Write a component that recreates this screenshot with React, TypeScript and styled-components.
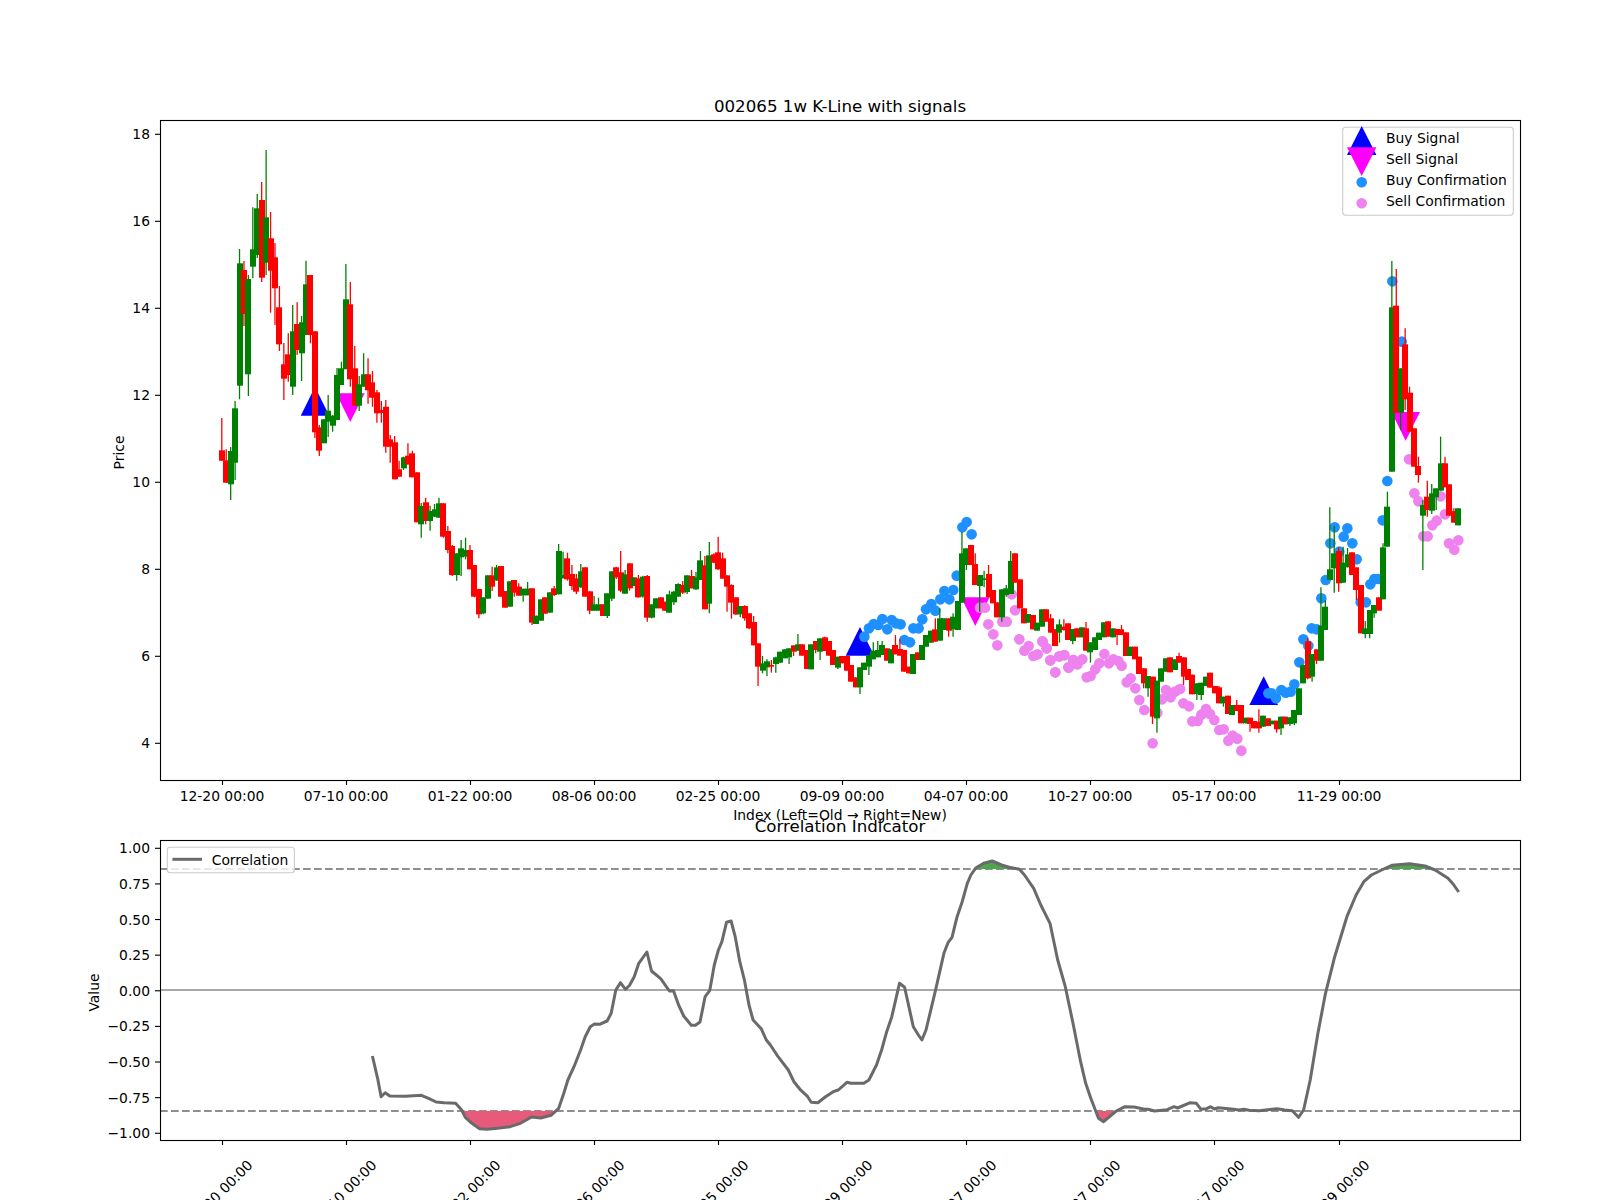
import React from "react";
import styled, { createGlobalStyle } from "styled-components";

type Row = [string, number, number, number?, number?];

const CANDLE_STEP = 4.432;
const CANDLE_START = 221.8;

// rows are [colour, bodyTop, bodyBottom, wickTop, wickBottom], read off the plot in thirds of a pixel
const section = (start: number, base: number, scale: number, rows: Row[]) =>
  rows.map(([c, top, bottom, wickTop, wickBottom], n) => ({
    x: CANDLE_START + CANDLE_STEP * (start + n),
    color: c === "r" ? "#ff0000" : "#008000",
    top: base + top / scale,
    bottom: base + bottom / scale,
    wickTop: base + (wickTop ?? top) / scale,
    wickBottom: base + (wickBottom ?? bottom) / scale,
  }));

const candles = [
  ...section(0, 0, 1, [
    ["r", 450.3, 460.7, 418, 460.7], ["r", 460.3, 482.7, 449.3, 483], ["g", 451, 484.3, 447, 500], ["g", 408.3, 462.7, 401, 480],
    ["g", 263.3, 385.7, 249, 399.3], ["r", 270, 314, 261, 326], ["g", 279, 374.3, 275, 396], ["g", 249.3, 266.7, 207.3, 278],
    ["g", 208.3, 255, 194, 258], ["r", 200, 277.7, 182, 282], ["g", 217.3, 262.7, 150, 275], ["r", 238.3, 270.7, 212, 312.7],
    ["r", 257.3, 288.3, 243, 325], ["r", 307.3, 344.3, 286, 351], ["r", 364.3, 378.7, 343, 400], ["r", 354.3, 375, 333.3, 381.7],
    ["g", 331.3, 386.7, 305, 395], ["r", 324, 350, 302.3, 355], ["g", 322.3, 353.3, 316, 381], ["g", 284.3, 335, 260.7, 335],
    ["r", 275, 335, 275, 343.3], ["r", 331.3, 432.3, 331, 438], ["r", 427.3, 450.7, 425, 456], ["g", 419.3, 443.3],
    ["g", 410.7, 421.7, 395, 437], ["g", 415.7, 425.7, 415, 431.7], ["g", 375, 420, 368, 420], ["g", 368.3, 385, 361.7, 385],
    ["g", 299.3, 369.3, 264, 369], ["r", 304.3, 379.3, 282, 386.7], ["r", 368.3, 405.7, 346, 405.7], ["g", 384.3, 405.7, 376, 411],
    ["g", 374.3, 386.7, 353.3, 386.7], ["r", 374.3, 390.3, 358.3, 403.7], ["r", 382.3, 397.7, 371, 406.7], ["r", 392.3, 413.3, 390, 422.7],
    ["r", 410, 413, 401, 422.7], ["r", 406.7, 446.7, 400, 452.7], ["r", 439.3, 446.7, 435, 462.7], ["r", 442.3, 479.3, 436, 479.3],
    ["r", 469.3, 476.7, 460.7, 476.7], ["g", 457.3, 468.3, 456.7, 470], ["r", 455.7, 464, 443.3, 465], ["r", 453.3, 477.3, 450.7, 477.3],
    ["r", 472.3, 522.3], ["g", 506, 524.3, 503, 537.7], ["r", 502.3, 521, 497.7, 524.3], ["g", 511, 521, 505.7, 530.7],
    ["g", 509.3, 516.7, 504, 517], ["g", 503.3, 517.7, 497.7, 517.7], ["r", 503.3, 536.7, 503.3, 537.7], ["r", 531, 550, 526, 553.3],
  ]),
  ...section(52, 500, 3, [
    ["r", 138, 225, 135, 228], ["g", 160, 225, 160, 242], ["g", 145, 172, 120, 228], ["g", 150, 170, 113, 178], ["r", 150, 208, 135, 208],
    ["r", 195, 290, 195, 292], ["r", 267, 343, 267, 355], ["g", 292, 340, 292, 343], ["g", 226, 296], ["r", 226, 260, 200, 273],
    ["g", 202, 242, 195, 242], ["r", 198, 290], ["r", 273, 323], ["g", 244, 320], ["r", 240, 278, 240, 290], ["r", 260, 287, 250, 287],
    ["g", 266, 286, 266, 305], ["g", 266, 286, 246, 286], ["r", 265, 368, 265, 375], ["g", 347, 372], ["g", 298, 362], ["r", 292, 341],
    ["g", 277, 338], ["r", 265, 285, 258, 288], ["g", 153, 283, 132, 283], ["g", 225, 235, 155, 235], ["r", 175, 238, 158, 242],
    ["r", 222, 258, 195, 270], ["r", 235, 275, 222, 282], ["g", 214, 262, 192, 264], ["r", 202, 290], ["r", 274, 332, 274, 342],
    ["g", 313, 332, 288, 332], ["g", 313, 332, 293, 332], ["r", 313, 348], ["g", 280, 348, 280, 354], ["g", 214, 296, 214, 303],
    ["r", 202, 232, 200, 237], ["r", 217, 272, 153, 277], ["g", 223, 281, 210, 281], ["r", 190, 265, 190, 272], ["g", 232, 258],
    ["r", 235, 292, 225, 293], ["g", 230, 290, 227, 293], ["r", 228, 353, 225, 365], ["g", 313, 353, 313, 355], ["g", 295, 325],
    ["r", 292, 325], ["r", 305, 332, 305, 333], ["g", 283, 338, 272, 338], ["g", 275, 307, 272, 315], ["g", 252, 290, 250, 290],
    ["r", 255, 278, 243, 282], ["g", 226, 276, 226, 282], ["r", 228, 265, 210, 265], ["g", 232, 268, 216, 270], ["g", 181, 240, 153, 240],
    ["r", 196, 328, 168, 328], ["g", 166, 311, 126, 340], ["r", 163, 188, 160, 190], ["r", 157, 208, 110, 210], ["r", 175, 236, 158, 236],
    ["r", 226, 260, 226, 335], ["r", 255, 308, 253, 356], ["r", 292, 343, 292, 345], ["g", 318, 343, 318, 352], ["r", 318, 355, 316, 362],
    ["r", 340, 385, 340, 388], ["r", 366, 436, 348, 436], ["r", 430, 500, 430, 558], ["g", 490, 512, 468, 520], ["g", 484, 502, 478, 528],
  ]),
  ...section(124, 500, 3, [
    ["r", 495, 500, 480, 518], ["g", 472, 492, 470, 518], ["g", 455, 488], ["g", 448, 475], ["g", 445, 472, 445, 492], ["r", 436, 455, 436, 468],
    ["g", 433, 452, 402, 452], ["r", 433, 467], ["r", 450, 507], ["g", 433, 508], ["r", 423, 450, 423, 460], ["g", 415, 455, 415, 480],
    ["r", 412, 453, 410, 453], ["r", 423, 467], ["r", 450, 495], ["g", 470, 503, 470, 507], ["r", 468, 490], ["r", 468, 512], ["r", 495, 545],
    ["r", 532, 562], ["g", 502, 562, 502, 582], ["g", 488, 510], ["g", 465, 500, 465, 525], ["g", 452, 478, 427, 478], ["g", 450, 472, 423, 472],
    ["g", 435, 465, 423, 465], ["r", 445, 482], ["g", 448, 490], ["r", 435, 463, 405, 463], ["r", 447, 467, 418, 467], ["r", 450, 515], ["r", 500, 520],
    ["g", 462, 522], ["r", 457, 480], ["g", 435, 480], ["g", 405, 440], ["g", 392, 428], ["r", 388, 425, 355, 425], ["g", 355, 422, 325, 422],
    ["g", 355, 390], ["r", 355, 392, 355, 410], ["g", 350, 388, 340, 410], ["g", 303, 390], ["g", 160, 308, 95, 308], ["g", 145, 195, 145, 210],
    ["r", 135, 195], ["r", 192, 255, 160, 255], ["g", 225, 258, 225, 335], ["g", 235, 240, 212, 262], ["r", 222, 292, 195, 292], ["r", 270, 310],
    ["r", 307, 352], ["g", 268, 352, 268, 365], ["g", 265, 285, 255, 290], ["g", 183, 282, 153, 282], ["r", 160, 248], ["r", 238, 325], ["r", 325, 370],
    ["g", 342, 368], ["r", 345, 388], ["g", 368, 392],
  ]),
  ...section(185, 580, 3, [
    ["g", 88, 140], ["r", 88, 125], ["r", 115, 158, 102, 158], ["r", 148, 198], ["g", 133, 158, 118, 188], ["r", 140, 150, 118, 152], ["r", 130, 180],
    ["g", 147, 183, 147, 193], ["r", 145, 172], ["g", 142, 172], ["r", 145, 212, 126, 212], ["g", 187, 217, 187, 248], ["g", 172, 210], ["g", 158, 180],
    ["g", 127, 172], ["r", 124, 170], ["g", 145, 172], ["r", 147, 165, 147, 195], ["r", 148, 165, 135, 165], ["r", 157, 228], ["g", 200, 228],
    ["r", 200, 238], ["r", 230, 282], ["r", 265, 310, 265, 325], ["g", 288, 325, 288, 350], ["r", 290, 410, 290, 432], ["g", 302, 415, 302, 458],
    ["g", 265, 305], ["g", 235, 275], ["r", 232, 277], ["g", 238, 270], ["r", 228, 248, 218, 248], ["r", 232, 290, 232, 315], ["r", 267, 300], ["r", 284, 343],
    ["g", 310, 342, 310, 360], ["g", 308, 345, 308, 360], ["g", 290, 318], ["r", 278, 323], ["r", 318, 340], ["r", 322, 370, 318, 370], ["g", 350, 370, 350, 380],
    ["r", 347, 402], ["g", 375, 405], ["r", 375, 393, 360, 393], ["r", 375, 430], ["g", 413, 430], ["r", 413, 432, 413, 455], ["r", 423, 445],
    ["r", 425, 445, 388, 458], ["g", 407, 440], ["r", 415, 438], ["g", 422, 433], ["r", 422, 448, 422, 458], ["g", 410, 445, 410, 465], ["r", 410, 433], ["g", 412, 432, 412, 438],
  ]),
  ...section(242, 480, 3, [
    ["g", 690, 730, 690, 736], ["g", 625, 705], ["g", 555, 610], ["r", 484, 595, 474, 598], ["g", 522, 590, 522, 605], ["r", 508, 542, 508, 552],
    ["g", 437, 542, 322, 542], ["g", 380, 450, 360, 450], ["g", 268, 300, 82, 300], ["g", 220, 265, 138, 338], ["r", 213, 310, 202, 335],
    ["g", 248, 308, 200, 308], ["g", 223, 262, 204, 262], ["r", 217, 285], ["r", 262, 330, 262, 360], ["r", 315, 460], ["g", 445, 462, 423, 475],
    ["g", 390, 462, 390, 475], ["g", 375, 400, 375, 413], ["r", 352, 392], ["g", 202, 358, 190, 358], ["g", 80, 200, 35, 200],
  ]),
  ...section(264, 250, 3, [
    ["g", 172, 665, 33, 665], ["r", 167, 488, 57, 488], ["g", 355, 488, 355, 540], ["r", 283, 448, 235, 480], ["r", 428, 545, 410, 545], ["r", 535, 650],
    ["r", 648, 675, 620, 698], ["g", 765, 797, 750, 960], ["r", 740, 780, 692, 800], ["g", 730, 782, 702, 792], ["g", 715, 742, 715, 780],
    ["g", 640, 722, 560, 722], ["r", 640, 712, 620, 712], ["r", 703, 797], ["r", 783, 818, 775, 818], ["g", 775, 826],
  ]),
];

type Pt = [number, number];
const crop = (baseX: number, baseY: number, scaleX: number, pts: Pt[]): Pt[] =>
  pts.map(([x, y]) => [baseX + x / scaleX, baseY + y / 3]);

const buyDots = [
  ...crop(760, 500, 3, [[313, 410], [327, 385], [341, 372], [355, 375], [367, 357], [382, 388], [395, 360], [408, 370], [422, 373], [433, 420], [450, 427], [460, 385], [476, 385], [487, 358], [498, 328], [514, 312], [526, 332], [541, 298], [553, 273], [568, 298], [580, 270], [590, 227], [607, 82], [620, 66], [635, 103]]),
  ...crop(1240, 480, 3, [[85, 640], [95, 640], [108, 655], [124, 630], [137, 638], [152, 635], [163, 613], [178, 547], [190, 478], [205, 497], [215, 445], [230, 448], [244, 355], [257, 300], [271, 190], [284, 142], [298, 215], [311, 170], [322, 145], [337, 190], [350, 238], [362, 367], [378, 367], [391, 313], [403, 297], [415, 297], [428, 121], [442, 3]]),
  ...crop(1240, 250, 3, [[457, 94], [485, 275]]),
];

const sellDots = [
  ...crop(760, 500, 3, [[660, 323], [675, 323], [685, 373], [700, 403], [712, 436], [727, 365], [740, 365], [755, 283], [765, 331], [778, 418], [793, 452], [806, 438], [820, 468], [833, 463], [847, 424], [860, 445], [871, 481], [886, 517], [898, 469], [913, 465], [926, 503], [940, 480], [950, 492]]),
  ...crop(1040, 580, 3, [[8, 185], [20, 205], [31, 241], [46, 277], [58, 229], [73, 226], [85, 262], [100, 240], [113, 253], [127, 238], [140, 292], [152, 288], [166, 268], [178, 250], [193, 222], [207, 250], [220, 238], [235, 243], [245, 257], [260, 307], [272, 295], [286, 325], [298, 360], [313, 390], [338, 490], [352, 398], [366, 358], [378, 330], [392, 352], [405, 335], [420, 327], [430, 370], [447, 379], [457, 424], [473, 423], [484, 404], [498, 387], [510, 402], [523, 420], [538, 450], [551, 448], [565, 482], [578, 467], [592, 476], [604, 512]]),
  ...crop(1240, 250, 3, [[507, 628], [523, 730], [535, 754], [602, 739], [615, 793], [590, 812], [577, 826], [550, 859], [563, 859], [627, 880], [643, 899], [655, 871]]),
];

const correlation = [
  ...crop(0, 760, 1.96, [[730, 888], [740, 955], [747, 1010], [755, 998], [764, 1008], [795, 1009], [826, 1006], [840, 1015], [855, 1026], [870, 1028], [893, 1030], [905, 1050], [912, 1072], [925, 1090], [940, 1106], [955, 1108], [975, 1105], [1000, 1100], [1020, 1090], [1042, 1071], [1060, 1074], [1080, 1066], [1095, 1045], [1105, 1000], [1113, 960], [1125, 920], [1138, 870], [1147, 830], [1157, 800], [1165, 792], [1175, 793], [1190, 783], [1198, 760], [1207, 690], [1216, 668], [1226, 688], [1234, 676], [1243, 650], [1252, 610], [1268, 576], [1277, 633], [1295, 656], [1312, 693], [1320, 692], [1330, 735], [1340, 768], [1355, 796], [1363, 796], [1372, 786], [1382, 710], [1391, 692], [1400, 615], [1408, 570], [1415, 545], [1424, 487], [1433, 483], [1441, 530], [1450, 605], [1459, 660], [1468, 735], [1476, 780], [1492, 806], [1502, 840], [1510, 855], [1525, 890], [1545, 930], [1556, 965]]),
  ...crop(800, 760, 1.96, [[0, 988], [15, 1010], [22, 1027], [35, 1028], [50, 1010], [65, 995], [75, 990], [92, 967], [100, 970], [125, 970], [135, 960], [150, 915], [160, 870], [170, 815], [180, 770], [195, 670], [205, 682], [222, 800], [232, 825], [239, 840], [247, 810], [265, 695], [282, 580], [290, 548], [298, 532], [308, 470], [318, 425], [328, 370], [335, 345], [345, 323], [360, 310], [377, 303], [395, 315], [410, 322], [430, 328], [440, 345], [458, 385], [472, 435], [490, 490], [505, 600], [520, 680], [535, 790], [550, 905], [560, 970], [570, 1015], [585, 1075], [595, 1085], [620, 1053], [637, 1040], [655, 1041], [675, 1048], [682, 1048], [695, 1053], [720, 1049], [733, 1040], [740, 1044], [765, 1028], [777, 1030], [786, 1048], [797, 1046], [805, 1040], [812, 1047], [820, 1043], [850, 1048], [860, 1050], [870, 1048], [880, 1051], [900, 1052], [935, 1046], [950, 1050], [965, 1052], [977, 1072], [987, 1050], [1000, 960], [1015, 820], [1030, 700], [1048, 590], [1072, 470], [1090, 405], [1105, 365], [1120, 345], [1140, 330], [1160, 316], [1195, 311], [1225, 318], [1245, 330], [1270, 355], [1280, 372], [1291, 396]]),
];

const linePoints = correlation.map(([x, y]) => `${x.toFixed(1)},${y.toFixed(1)}`).join(" ");

const xTicks = [222, 346, 470, 594, 718, 842, 966, 1090, 1214, 1339];
const xLabels = ["12-20 00:00", "07-10 00:00", "01-22 00:00", "08-06 00:00", "02-25 00:00", "09-09 00:00", "04-07 00:00", "10-27 00:00", "05-17 00:00", "11-29 00:00"];
const priceTicks = [18, 16, 14, 12, 10, 8, 6, 4];
const corrTicks = ["1.00", "0.75", "0.50", "0.25", "0.00", "\u22120.25", "\u22120.50", "\u22120.75", "\u22121.00"];

const priceY = (v: number) => 482.3 - (v - 10) * 43.5;
const corrY = (n: number) => 848.3 + n * 35.62;

const GlobalStyle = createGlobalStyle`
  html, body {
    margin: 0;
    padding: 0;
    background: #fff;
  }
`;

const Figure = styled.div`
  display: flex;
  flex-direction: column;
  width: 1600px;
  height: 1200px;
  overflow: hidden;
  background: #fff;
`;

const PanelSvg = styled.svg`
  display: block;
  flex: none;
  overflow: visible;
`;

const Label = styled.text<{ $size?: number; $anchor?: string }>`
  font-family: "DejaVu Sans", sans-serif;
  font-size: ${(p) => p.$size ?? 13.89}px;
  text-anchor: ${(p) => p.$anchor ?? "middle"};
  fill: #000;
`;

const Spine = styled.rect`
  fill: none;
  stroke: #000;
  stroke-width: 1.1px;
`;

const Tick = styled.line`
  stroke: #000;
  stroke-width: 1.1px;
`;

const LegendBox = styled.rect`
  fill: rgba(255, 255, 255, 0.8);
  stroke: #ccc;
  stroke-width: 1.1px;
`;

const Dot = styled.circle<{ $color: string }>`
  fill: ${(p) => p.$color};
`;

const Marker = styled.polygon<{ $color: string }>`
  fill: ${(p) => p.$color};
`;

const Wick = styled.line<{ $color: string }>`
  stroke: ${(p) => p.$color};
  stroke-width: 1.3px;
`;

const Body = styled.rect<{ $color: string }>`
  fill: ${(p) => p.$color};
`;

const GuideLine = styled.line<{ $dashed?: boolean }>`
  stroke: ${(p) => (p.$dashed ? "#8f8f8f" : "#a9a9a9")};
  stroke-width: 2.1px;
  stroke-dasharray: ${(p) => (p.$dashed ? "7.7 3.3" : "none")};
`;

const CorrelationLine = styled.polyline`
  fill: none;
  stroke: #6a6a6a;
  stroke-width: 3px;
  stroke-linejoin: round;
`;

const LegendLine = styled.line`
  stroke: #6a6a6a;
  stroke-width: 3px;
`;

const Fill = styled.polygon<{ $color: string }>`
  fill: ${(p) => p.$color};
`;

const buyMarker = (x: number, base: number) => `${x - 14.3},${base} ${x + 14.3},${base} ${x},${base - 28.7}`;
const sellMarker = (x: number, top: number) => `${x - 14.3},${top} ${x + 14.3},${top} ${x},${top + 28.7}`;

const App = () => {
  return (
    <Figure>
      <GlobalStyle />
      <PanelSvg width={1600} height={820} viewBox="0 0 1600 820">
        {[[315, 415.7], [860, 655.7], [1263.7, 705]].map(([x, b]) => (
          <Marker key={x} points={buyMarker(x, b)} $color="#0000ff" />
        ))}
        {[[350.3, 393.3], [975.3, 597.3], [1405.7, 412]].map(([x, t]) => (
          <Marker key={x} points={sellMarker(x, t)} $color="#ff00ff" />
        ))}
        {sellDots.map(([x, y], i) => (
          <Dot key={i} cx={x} cy={y} r={5.3} $color="#ee82ee" />
        ))}
        {buyDots.map(([x, y], i) => (
          <Dot key={i} cx={x} cy={y} r={5.3} $color="#1e90ff" />
        ))}
        {candles.map((c, i) => (
          <g key={i}>
            <Wick x1={c.x} x2={c.x} y1={c.wickTop} y2={c.wickBottom} $color={c.color} />
            <Body x={Math.round(c.x - 3)} y={c.top} width={6} height={c.bottom - c.top} $color={c.color} />
          </g>
        ))}
        <Spine x={160.5} y={120.5} width={1360} height={660} />
        {xTicks.map((x, i) => (
          <g key={x}>
            <Tick x1={x + 0.5} x2={x + 0.5} y1={780} y2={785} />
            <Label x={x} y={801}>{xLabels[i]}</Label>
          </g>
        ))}
        {priceTicks.map((v) => (
          <g key={v}>
            <Tick x1={155} x2={160} y1={priceY(v)} y2={priceY(v)} />
            <Label x={150} y={priceY(v) + 5} $anchor="end">{v}</Label>
          </g>
        ))}
        <Label x={840} y={112} $size={16.67}>002065 1w K-Line with signals</Label>
        <Label x={840} y={820}>Index (Left=Old → Right=New)</Label>
        <Label x={0} y={0} transform="translate(124 452.5) rotate(-90)">Price</Label>
        <LegendBox x={1342.7} y={127.3} width={170.6} height={88} rx={3} />
        <Marker points="1347,155 1376.4,155 1361.7,126" $color="#0000ff" />
        <Marker points="1347,147.3 1376.4,147.3 1361.7,176" $color="#ff00ff" />
        <Dot cx={1361.7} cy={182.3} r={5.3} $color="#1e90ff" />
        <Dot cx={1361.7} cy={203.3} r={5.3} $color="#ee82ee" />
        <Label x={1386} y={143} $anchor="start">Buy Signal</Label>
        <Label x={1386} y={164} $anchor="start">Sell Signal</Label>
        <Label x={1386} y={185} $anchor="start">Buy Confirmation</Label>
        <Label x={1386} y={206} $anchor="start">Sell Confirmation</Label>
      </PanelSvg>
      <PanelSvg width={1600} height={380} viewBox="0 820 1600 380">
        <defs>
          <clipPath id="below">
            <rect x={160} y={1111} width={1120} height={29} />
          </clipPath>
          <clipPath id="above">
            <rect x={160} y={840} width={1360} height={29} />
          </clipPath>
        </defs>
        <GuideLine x1={160} x2={1520} y1={990} y2={990} />
        <GuideLine $dashed x1={160} x2={1520} y1={869} y2={869} />
        <GuideLine $dashed x1={160} x2={1520} y1={1111} y2={1111} />
        <Fill points={linePoints} clipPath="url(#below)" $color="#e75a79" />
        <Fill points={linePoints} clipPath="url(#above)" $color="#4da64d" />
        <CorrelationLine points={linePoints} />
        <Spine x={160.5} y={840.5} width={1360} height={300} />
        {xTicks.map((x, i) => (
          <g key={x}>
            <Tick x1={x + 0.5} x2={x + 0.5} y1={1140} y2={1145} />
            <Label x={0} y={0} dominantBaseline="central" transform={`translate(${x - 2} 1192.5) rotate(-45)`}>{xLabels[i]}</Label>
          </g>
        ))}
        {corrTicks.map((t, n) => (
          <g key={t}>
            <Tick x1={155} x2={160} y1={corrY(n)} y2={corrY(n)} />
            <Label x={150} y={corrY(n) + 5} $anchor="end">{t}</Label>
          </g>
        ))}
        <Label x={840} y={832} $size={16.67}>Correlation Indicator</Label>
        <Label x={0} y={0} transform="translate(99 992.5) rotate(-90)">Value</Label>
        <LegendBox x={167.3} y={847.3} width={127.1} height={25.4} rx={3} />
        <LegendLine x1={172.4} x2={202} y1={859.3} y2={859.3} />
        <Label x={211.7} y={864.5} $anchor="start">Correlation</Label>
      </PanelSvg>
    </Figure>
  );
};

export default App;
